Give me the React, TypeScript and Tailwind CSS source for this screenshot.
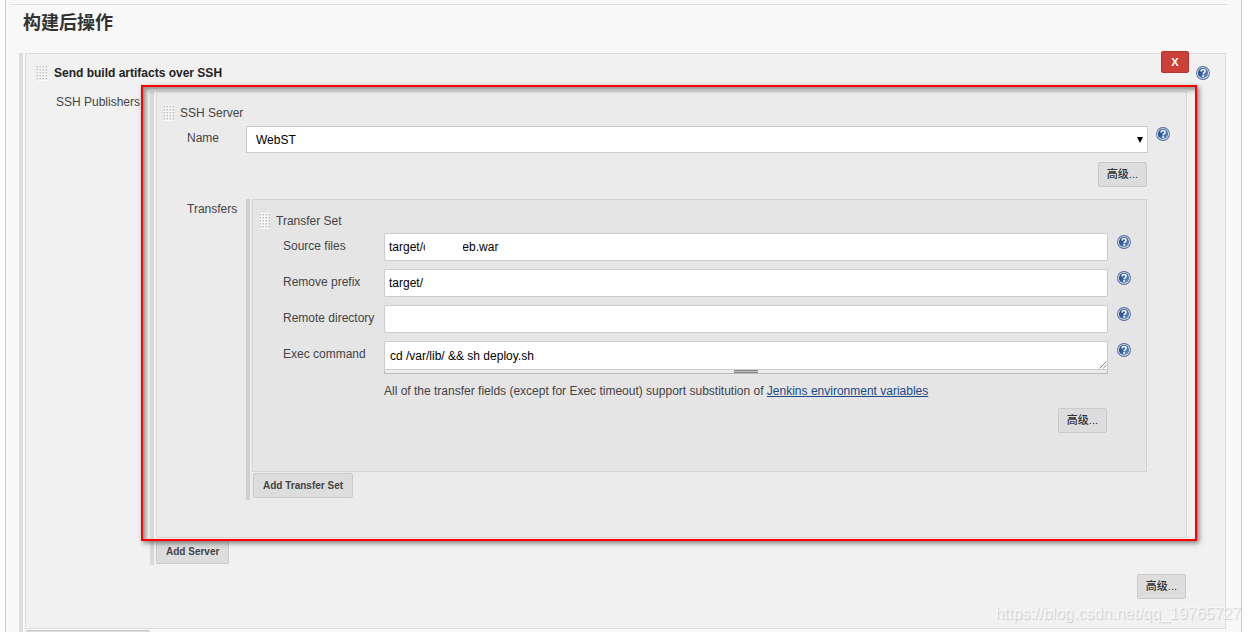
import React from 'react';

const FONT = "font-['Liberation_Sans','Noto_Sans_CJK_SC',sans-serif]";

const DragHandle: React.FC = () => (
  <svg className="h-4 w-[11px] shrink-0 cursor-move" viewBox="0 0 11 16" aria-hidden="true">
    <rect width="11" height="16" fill="#f9f9f9" />
    {[1, 4, 7, 10].map((x) =>
      [1, 4, 7, 10, 13].map((y) => (
        <rect key={`${x}-${y}`} x={x - 0.5} y={y} width="1.3" height="1.5" fill="#b0b0b0" />
      ))
    )}
  </svg>
);

const HelpButton: React.FC<{ label: string; className?: string }> = ({ label, className = '' }) => (
  <button type="button" aria-label={`Help for ${label}`} className={`h-[14px] w-[14px] shrink-0 ${className}`}>
    <svg className="h-[14px] w-[14px]" viewBox="0 0 14 14" aria-hidden="true">
      <defs>
        <linearGradient id="help-fill" x1="0" y1="0" x2="1" y2="1">
          <stop offset="0" stopColor="#1d4282" />
          <stop offset="0.5" stopColor="#3560a2" />
          <stop offset="1" stopColor="#86a6d2" />
        </linearGradient>
      </defs>
      <circle cx="7" cy="7" r="6.9" fill="#4d6a98" />
      <circle cx="7" cy="7" r="6.1" fill="#c9d7ea" />
      <circle cx="7" cy="7" r="5.1" fill="url(#help-fill)" />
      <path
        d="M5.1 5.6C5.1 4.2 6 3.5 7.1 3.5s2 .7 2 1.8c0 1.4-1.9 1.5-1.9 3"
        fill="none"
        stroke="#fff"
        strokeWidth="1.6"
      />
      <rect x="6.3" y="9.2" width="1.7" height="1.6" fill="#fff" />
    </svg>
  </button>
);

const GrayButton: React.FC<{ children: React.ReactNode }> = ({ children }) => (
  <button
    type="button"
    className="flex h-[25px] items-center justify-center rounded-xs border border-[#cacaca] bg-[#dddddd] px-[9px] text-[10px] font-bold text-[#444]"
  >
    {children}
  </button>
);

const AdvancedButton: React.FC = () => (
  <button
    type="button"
    className="flex h-[25px] items-center justify-center rounded-xs border border-[#cacaca] bg-[#dddddd] px-2 text-[11px] font-medium text-[#333]"
  >
    高级...
  </button>
);

interface TextRowProps {
  id: string;
  label: string;
  value: string;
  masked?: boolean;
}

const TextRow: React.FC<TextRowProps> = ({ id, label, value, masked }) => (
  <div className="flex items-start">
    <label htmlFor={id} className="w-[101px] shrink-0 leading-[26px]">
      {label}
    </label>
    <div className="relative min-w-0 flex-1">
      <input
        id={id}
        type="text"
        defaultValue={value}
        className="block h-7 w-full rounded-xs border border-[#ccc] bg-white px-1 text-black outline-none"
      />
      {/* redacted part of the file name */}
      {masked && <span className="absolute top-1 left-[41px] h-5 w-[38px] bg-white" />}
    </div>
    <HelpButton label={label} className="mt-[2px] ml-[9px]" />
  </div>
);

const fields: TextRowProps[] = [
  { id: 'source', label: 'Source files', value: 'target/c\u00a0\u00a0\u00a0\u00a0\u00a0\u00a0\u00a0\u00a0\u00a0\u00a0eb.war', masked: true },
  { id: 'prefix', label: 'Remove prefix', value: 'target/' },
  { id: 'remote', label: 'Remote directory', value: '' },
];

const TransferSet: React.FC = () => (
  <div className="border border-[#d3d3d3] bg-[#e5e5e5] pt-3 pb-[38px]">
    <div className="flex items-center gap-[6px] pl-[6px] leading-[18px]">
      <DragHandle />
      <span>Transfer Set</span>
    </div>
    <div className="mt-[3px] flex flex-col gap-2 pr-[15px] pl-[30px]">
      {fields.map((field) => (
        <TextRow key={field.id} {...field} />
      ))}
      <div className="flex items-start">
        <label htmlFor="exec" className="w-[101px] shrink-0 leading-[26px]">
          Exec command
        </label>
        <div className="min-w-0 flex-1">
          <div className="relative">
            <textarea
              id="exec"
              rows={1}
              defaultValue="cd /var/lib/ && sh deploy.sh"
              className="block h-[29px] w-full resize-none overflow-hidden rounded-t-xs border border-[#ccc] bg-white px-[5px] py-[6px] leading-4 text-black outline-none"
            />
            <svg className="absolute right-[1px] bottom-[1px] h-2 w-2" viewBox="0 0 8 8" aria-hidden="true">
              <path d="M0.5 7.5L7.5 0.5M4 7.5L7.5 4" stroke="#777" strokeWidth="0.9" fill="none" />
            </svg>
          </div>
          <div className="flex h-1 justify-center border-x border-b border-[#bbb] bg-[#ececec]">
            <span className="h-[3px] w-6 border-y border-[#888] bg-[#bbb]" />
          </div>
        </div>
        <HelpButton label="Exec command" className="mt-[2px] ml-[9px]" />
      </div>
    </div>
    <p className="mt-[9px] pl-[131px] leading-4">
      All of the transfer fields (except for Exec timeout) support substitution of{' '}
      <a href="#env" className="text-[#204a87] underline">
        Jenkins environment variables
      </a>
    </p>
    <div className="mt-[9px] flex justify-end pr-[39px]">
      <AdvancedButton />
    </div>
  </div>
);

const SshServer: React.FC = () => (
  <div className="relative border border-[#d8d8d8] bg-[#ebebeb] pt-[13px] pb-[37px]">
    <div className="flex items-center gap-[6px] pl-[6px] leading-4">
      <DragHandle />
      <span>SSH Server</span>
    </div>
    <div className="mt-[5px] flex items-start pr-4 pl-[30px]">
      <label htmlFor="server" className="w-[59px] shrink-0 leading-6">
        Name
      </label>
      <div className="relative min-w-0 flex-1">
        <select
          id="server"
          className="block h-[27px] w-full appearance-none border border-[#ccc] bg-white px-[9px] text-black outline-none"
        >
          <option>WebST</option>
        </select>
        <svg className="pointer-events-none absolute top-[11px] right-[5px] h-[6px] w-[6px]" viewBox="0 0 6 6" aria-hidden="true">
          <path d="M0 0h6L3 6z" fill="#000" />
        </svg>
      </div>
      <HelpButton label="Name" className="mt-px ml-2" />
    </div>
    <div className="mt-[9px] flex justify-end pr-[39px]">
      <AdvancedButton />
    </div>
    <div className="mt-3 flex items-start pr-[39px] pl-[30px]">
      <span className="w-[59px] shrink-0 leading-5">Transfers</span>
      <div className="min-w-0 flex-1 border-l-4 border-[#d0d0d0] pb-[2px] pl-[2px]">
        <TransferSet />
        <div className="mt-px flex pl-px">
          <GrayButton>Add Transfer Set</GrayButton>
        </div>
      </div>
    </div>
    {/* highlight frame */}
    <div className="pointer-events-none absolute -top-[7px] -right-[11px] -bottom-1 -left-4 border-2 border-[#fe0000] shadow-[2px_2px_5px_rgba(0,0,0,0.5),inset_3px_3px_4px_rgba(0,0,0,0.4)]" />
  </div>
);

const App: React.FC = () => {
  return (
    <div className={`relative h-screen overflow-hidden bg-white pr-[7px] pl-[5px] text-xs text-[#444] ${FONT}`}>
      <main className="flex h-full flex-col border-x border-[#ccc] bg-[#f8f8f8] pt-1">
        <hr className="mr-[14px] ml-1 border-[#ddd]" />
        <h2 className="mt-[6px] ml-[17px] text-lg leading-6 font-bold text-[#333]">构建后操作</h2>

        <div className="mt-[18px] mr-[15px] ml-[13px] flex-1 border-l-4 border-[#dcdcdc] pl-[2px]">
          <section className="relative border border-[#ddd] bg-[#f1f1f1] pt-[10px] pb-[29px]">
            <button
              type="button"
              aria-label="X"
              className="absolute -top-[3px] right-9 h-[22px] w-7 rounded-xs border border-[#b33630] bg-[#cb4038] text-[11px] leading-5 font-bold text-white"
            >
              X
            </button>
            <div className="flex items-center pr-[15px] pl-[10px] leading-[18px]">
              <DragHandle />
              <h3 className="ml-[7px] flex-1 font-bold text-[#222]">Send build artifacts over SSH</h3>
              <HelpButton label="Send build artifacts over SSH" />
            </div>
            <div className="mt-[9px] flex items-start pr-[38px] pl-[30px]">
              <span className="w-[94px] shrink-0 leading-[22px]">SSH Publishers</span>
              <div className="min-w-0 flex-1 border-l-4 border-[#d8d8d8] pb-px pl-[2px]">
                <SshServer />
                <div className="mt-px flex">
                  <GrayButton>Add Server</GrayButton>
                </div>
              </div>
            </div>
            <div className="mt-[9px] flex justify-end pr-[39px]">
              <AdvancedButton />
            </div>
          </section>
          <button
            type="button"
            aria-label="Add"
            className="mt-px ml-px block h-[25px] w-[124px] rounded-xs border border-[#cacaca] bg-[#dddddd]"
          />
        </div>
      </main>
      <span className="pointer-events-none absolute right-2 bottom-2 text-base leading-5 text-white/60 [text-shadow:1px_1px_1px_rgba(0,0,0,0.15)]">
        https://blog.csdn.net/qq_19765727
      </span>
    </div>
  );
};

export default App;
